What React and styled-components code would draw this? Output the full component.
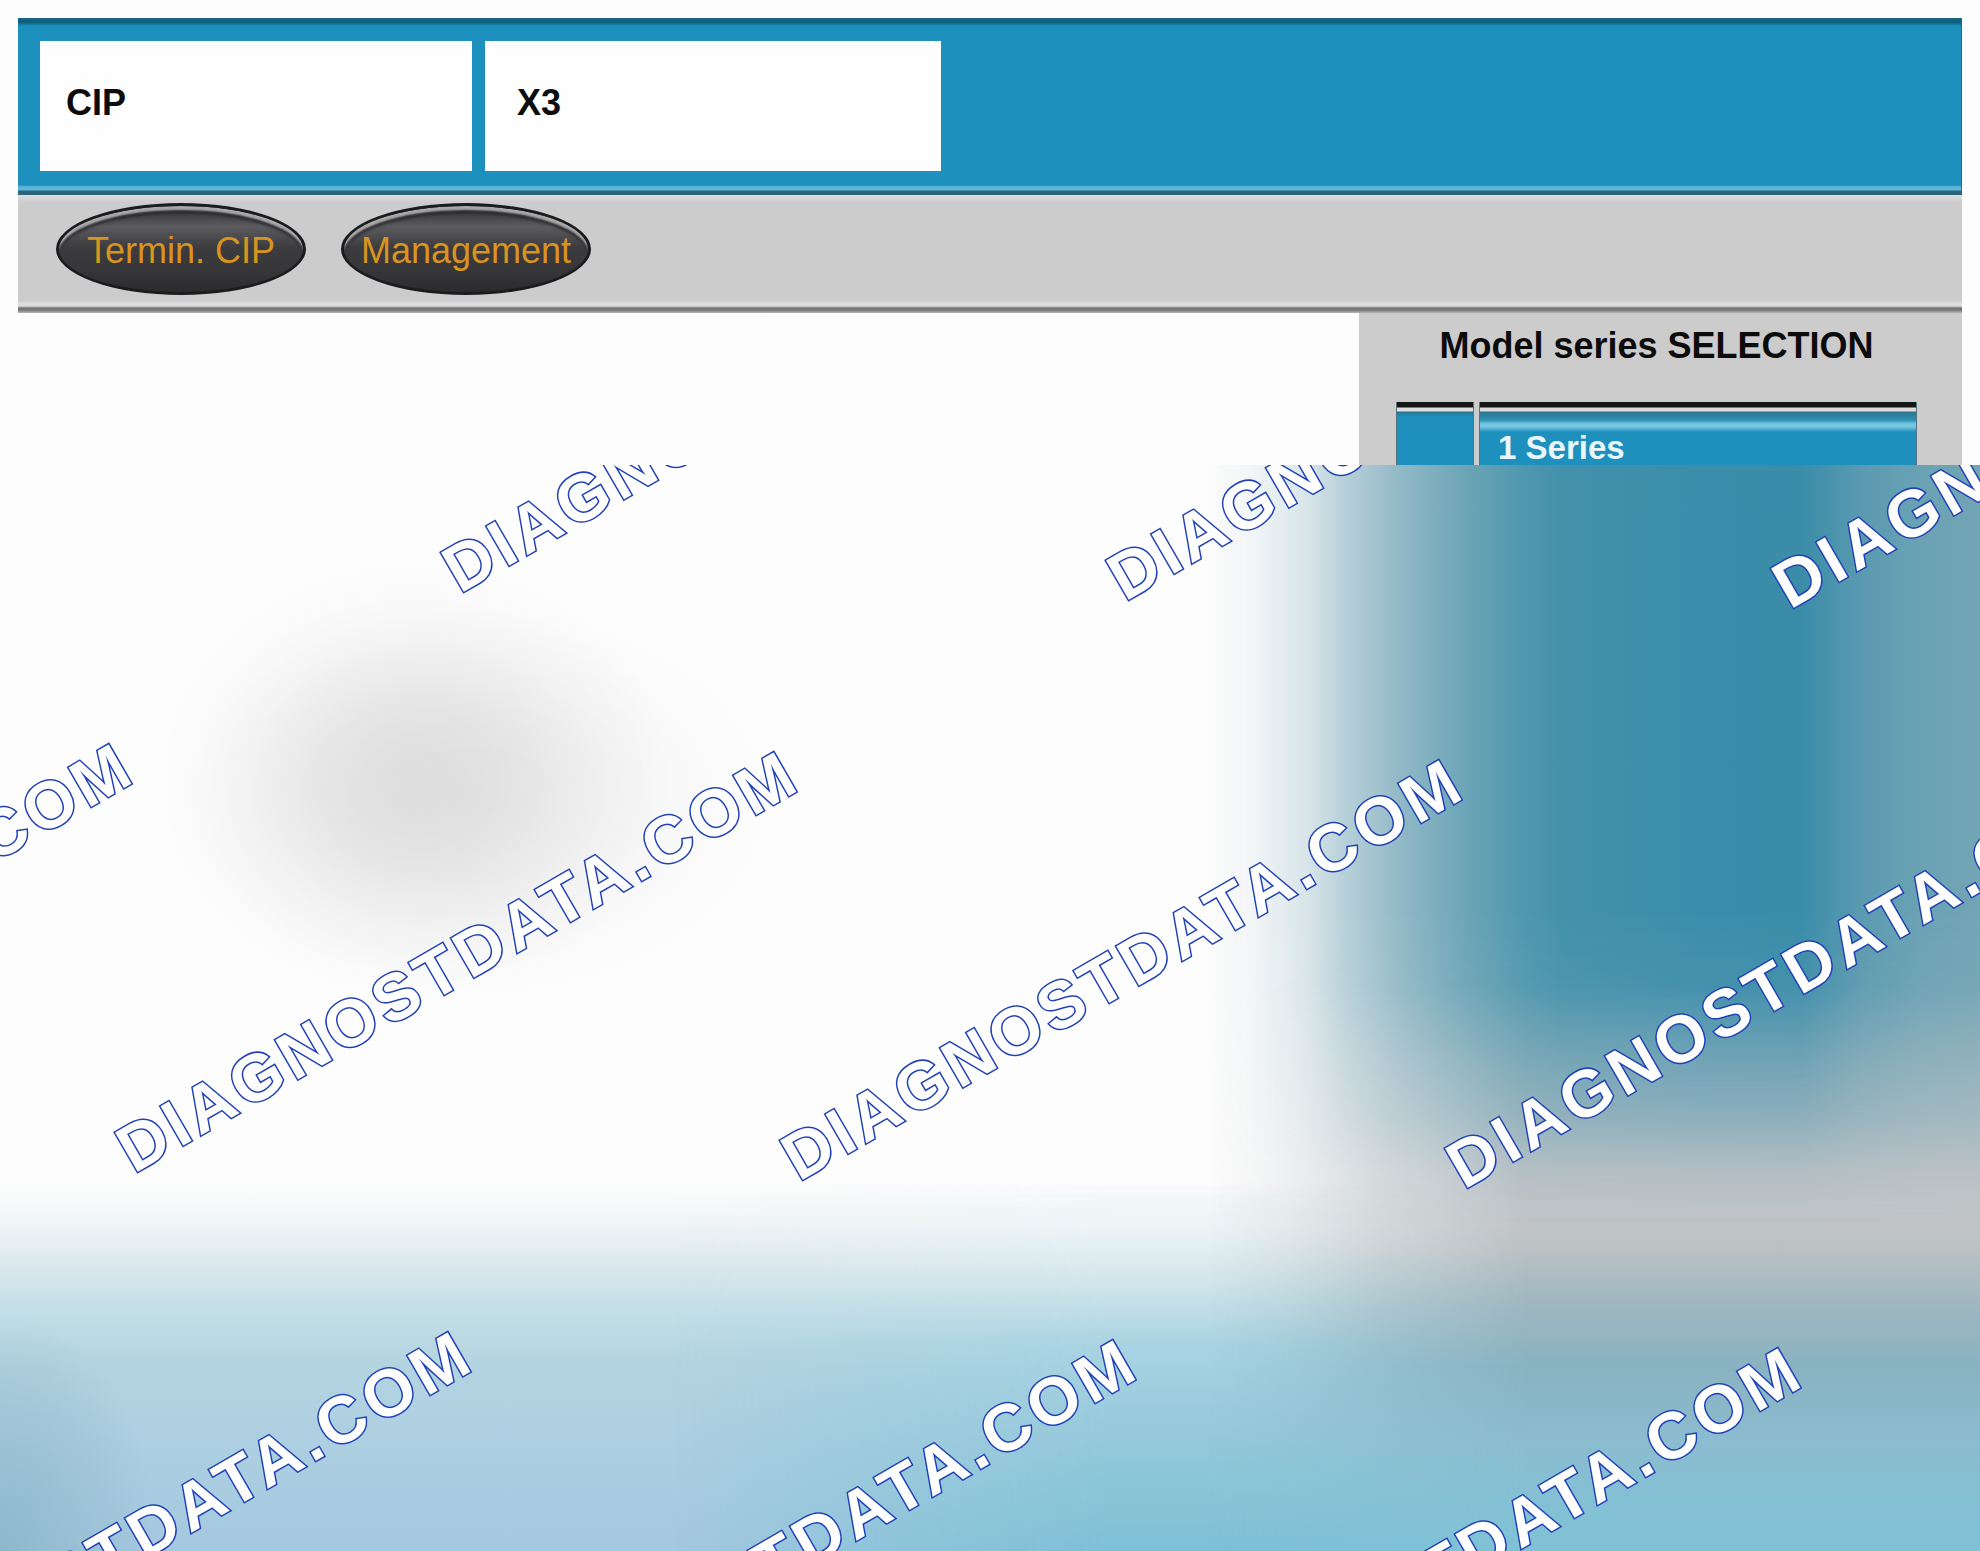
import styled, { createGlobalStyle, css } from "styled-components";

const GlobalStyle = createGlobalStyle`
  *, *::before, *::after {
    box-sizing: border-box;
  }

  body {
    margin: 0;
    background: #fdfdfd;
    font-family: "Liberation Sans", Arial, sans-serif;
    font-size: 36px;
    line-height: 40px;
    color: #0c0c0c;
  }
`;

const Page = styled.div`
  min-height: 100vh;
  display: flex;
  flex-direction: column;
`;

const Screen = styled.div`
  padding: 18px 18px 0;
`;

/* ---------- vehicle header ---------- */

const Header = styled.header`
  display: flex;
  gap: 13px;
  padding: 23px 22px 24px;
  background:
    linear-gradient(#1a6a86, #0d5c76 4px, #1e90be 8px, transparent 9px),
    linear-gradient(to top, #2b6478 4px, #5fb6d8 5px, #5fb6d8 8px, #1e90be 10px);
  border-right: 1px solid #1b6f90;
`;

const Field = styled.div`
  flex: 0 1 ${(props) => props.$width};
  display: flex;
  align-items: center;
  height: 130px;
  padding: 0 25px 6px ${(props) => (props.$indent ? "32px" : "26px")};
  background: #fefefe;
  font-weight: 700;
`;

/* ---------- toolbar ---------- */

const Toolbar = styled.nav`
  display: flex;
  gap: 35px;
  padding: 8px 38px 18px;
  background: linear-gradient(
    #dedcdd,
    #cccccc 8px,
    #cccccc calc(100% - 12px),
    #dddddd calc(100% - 10px),
    #dddddd calc(100% - 7px),
    #757575 calc(100% - 5px),
    #757575 calc(100% - 3px),
    #b8b8b8
  );
`;

const OvalButton = styled.button`
  width: 250px;
  height: 92px;
  padding: 3px 0 0;
  border: 3px solid #1c1c1e;
  border-radius: 50%;
  background: linear-gradient(#2c2c2e, #5c5c60 24%, #3c3c3f 48%, #38383a 70%, #2c2c2e);
  box-shadow: inset 0 5px 2px -1px #a9a9ab, inset 0 9px 3px -2px #29292b;
  color: #d9931f;
  font: inherit;
  white-space: nowrap;
  display: flex;
  align-items: center;
  justify-content: center;
`;

/* ---------- model series ---------- */

const Workspace = styled.main`
  display: flex;
  justify-content: flex-end;
  height: 152px;
  overflow: hidden;
`;

const SeriesPanel = styled.section`
  flex: 0 1 603px;
  padding: 13px 45px 0 37px;
  background: #cccccc;
`;

const PanelTitle = styled.h1`
  margin: 0 0 36px;
  font-size: 36px;
  line-height: 40px;
  font-weight: 700;
  text-align: center;
  white-space: nowrap;
`;

const SeriesList = styled.ul`
  list-style: none;
  margin: 0;
  padding: 0;
`;

const SeriesRow = styled.li`
  display: grid;
  grid-template-columns: 78px 1fr;
  gap: 5px;
`;

const cell = css`
  border: 1px solid #56727e;
  border-top: 0;
  height: 64px;
`;

const Marker = styled.span`
  ${cell}
  background: linear-gradient(#151515 5px, #dcdcdc 6px, #dcdcdc 9px, #2a7590 10px, #1e90be 15px);
`;

const SeriesButton = styled.button`
  ${cell}
  padding: 26px 20px 0 18px;
  background: linear-gradient(
    #151515 5px,
    #dcdcdc 6px,
    #dcdcdc 9px,
    #2a7590 10px,
    #2f8fb2 18px,
    #76c6e2 22px,
    #76c6e2 25px,
    #1e90be 30px
  );
  color: #e9f7fc;
  font: inherit;
  font-size: 33px;
  font-weight: 700;
  text-align: left;
`;

/* ---------- frosted area with the watermark ---------- */

const Veil = styled.div`
  flex: 1;
  display: grid;
  position: relative;
  overflow: hidden;
`;

const Layer = styled.div`
  grid-area: 1 / 1;
`;

const Floor = styled(Layer)`
  background:
    radial-gradient(ellipse 8% 22% at 0% 100%, #8fb8cb, #a4c8d800),
    radial-gradient(ellipse 13% 20% at 21% 29%, #00000018, #00000012 35%, #00000007 68%, #00000000),
    radial-gradient(ellipse 15% 18% at 24% 31%, #0000000a, #00000008 40%, #00000003 80%, #00000000),
    linear-gradient(
      #fdfdfd 66%,
      #f4f7f8 69%,
      #dfeaef 73%,
      #c3dee6 78%,
      #b3d3e0 83%,
      #accfe1 90%,
      #a4c8df
    );
`;

const Shore = styled(Layer)`
  background: linear-gradient(
    #fdfdfd00 66%,
    #eef4f6 70%,
    #d3e6ec 75%,
    #a9d3e2 81%,
    #93c8da 90%,
    #7dc0d6
  );
  mask-image: linear-gradient(to right, transparent 34%, #0008 44%, #000 56%);
`;

const Slate = styled(Layer)`
  background: linear-gradient(
    #c4c6c8 68%,
    #bcc1c4 72%,
    #a0b7c0 77%,
    #89b2c1 83%,
    #8bbccf 90%,
    #80c1d6 98%
  );
  mask-image: linear-gradient(to right, transparent 61%, #0003 65%, #0009 70%, #000 77%);
`;

const Glow = styled(Layer)`
  background: linear-gradient(
    to right,
    #fdfdfd00 61%,
    #f4f6f7 63%,
    #d8e5e9 66%,
    #b6cfd8 68%,
    #8eb7c5 71%,
    #6ca5b7 74%,
    #4f97ae 77%,
    #4391ab 79%,
    #3b8dab 86%,
    #3a8ca9 91%,
    #5a9ab0 94%,
    #6aa2b4 97%,
    #72a5b5
  );
  mask-image: linear-gradient(#000 41%, #000e 48%, #0009 55%, #0006 60%, #0002 65%, transparent 70%);
`;

const Mark = styled.span`
  position: absolute;
  left: ${(props) => props.$x}px;
  top: ${(props) => props.$y}px;
  color: #fefefe;
  -webkit-text-stroke: 3px #2042b6;
  paint-order: stroke fill;
  stroke-linejoin: round;
  font-size: 66px;
  line-height: 66px;
  font-weight: 700;
  letter-spacing: 5px;
  white-space: nowrap;
  transform: rotate(-30deg);
  transform-origin: 0 56px;
`;

const fields = [
  { label: "CIP", width: "432px" },
  { label: "X3", width: "456px", indent: true },
];

const actions = ["Termin. CIP", "Management"];

const series = ["1 Series"];

// every row of marks starts further left than the one above it
const marks = [0, 1, 2].flatMap((row) =>
  [-1, 0, 1, 2, 3].map((col) => ({
    id: `${row}-${col}`,
    x: 460 + col * 665 - row * 326,
    y: 73 + col * 8 + row * 580,
  }))
).filter(({ x, y }) => x < 1980 && x + y > -100 && y - 380 < 1086);

function App() {
  return (
    <Page>
      <GlobalStyle />
      <Screen>
        <Header>
          {fields.map(({ label, width, indent }) => (
            <Field key={label} $width={width} $indent={indent}>
              {label}
            </Field>
          ))}
        </Header>

        <Toolbar>
          {actions.map((action) => (
            <OvalButton key={action} type="button">
              {action}
            </OvalButton>
          ))}
        </Toolbar>

        <Workspace>
          <SeriesPanel>
            <PanelTitle>Model series SELECTION</PanelTitle>
            <SeriesList>
              {series.map((name) => (
                <SeriesRow key={name}>
                  <Marker />
                  <SeriesButton type="button">{name}</SeriesButton>
                </SeriesRow>
              ))}
            </SeriesList>
          </SeriesPanel>
        </Workspace>
      </Screen>

      <Veil>
        <Floor />
        <Shore />
        <Slate />
        <Glow />
        {marks.map(({ id, x, y }) => (
          <Mark key={id} $x={x} $y={y}>
            DIAGNOSTDATA.COM
          </Mark>
        ))}
      </Veil>
    </Page>
  );
}

export default App;
